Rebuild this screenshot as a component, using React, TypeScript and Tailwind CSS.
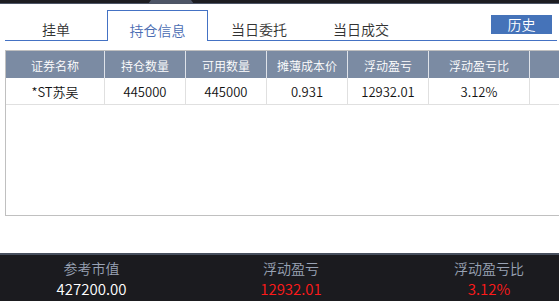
const tabs = ['挂单', '持仓信息', '当日委托', '当日成交'];

const columns = [
  { title: '证券名称', w: 'w-[99px]' },
  { title: '持仓数量', w: 'w-[81px]' },
  { title: '可用数量', w: 'w-[81px]' },
  { title: '摊薄成本价', w: 'w-[81px]' },
  { title: '浮动盈亏', w: 'w-[81px]' },
  { title: '浮动盈亏比', w: 'w-[101px]' },
];

const rows = [['*ST苏吴', '445000', '445000', '0.931', '12932.01', '3.12%']];

export default function App() {
  const active = 1;

  return (
    <div
      className="relative flex h-[301px] w-[559px] flex-col overflow-hidden bg-white font-[350]"
      style={{ fontFamily: '"Noto Sans CJK SC", "Liberation Sans", sans-serif' }}
    >
      {/* top strip */}
      <div className="h-[3px] bg-[#1d1d21]" />
      <div className="h-px bg-[#4d5566]" />
      <svg className="absolute left-[148px] top-0" width="46" height="4" viewBox="0 0 46 4">
        <polygon points="3,0 43,0 46,4 0,4" fill="#4d5566" />
      </svg>

      {/* tabs */}
      <div className="ml-[5px] mr-[2px] mt-[6px] flex h-[31px] border-b border-[#4472c4]">
        {tabs.map((t, i) =>
          i === active ? (
            <div
              key={t}
              className="-mb-px flex h-[31px] w-[101px] items-start justify-center border-x border-t border-[#4472c4] bg-white pt-[10px] text-[14px] leading-[18px] text-[#4a6cb3]"
            >
              {t}
            </div>
          ) : (
            <div
              key={t}
              className="flex h-[30px] w-[102px] items-start justify-center pt-[10px] text-[14px] leading-[18px] text-[#333]"
            >
              {t}
            </div>
          )
        )}
        <button className="ml-auto mr-[5px] mt-[5px] h-[19px] w-[61px] bg-[#4573b9] text-[14px] leading-[19px] text-white">
          历史
        </button>
      </div>

      {/* table */}
      <div className="ml-[5px] mt-[9px] h-[166px] border-y border-l border-[#c0c0c0]">
        <div className="flex h-[27px] bg-[#7b8ba3] text-[12px] text-white">
          {columns.map((c) => (
            <div key={c.title} className={`${c.w} flex shrink-0 items-center justify-center border-r border-[#dfe3ea] pt-[2px]`}>
              {c.title}
            </div>
          ))}
          <div className="flex-1" />
        </div>
        {rows.map((r, ri) => (
          <div key={ri} className="flex h-[27px] border-b border-[#e0e0e0] text-[13px] text-[#111]">
            {r.map((v, ci) => (
              <div key={ci} className={`${columns[ci].w} flex shrink-0 items-center justify-center border-r border-[#e0e0e0] pt-[1px]`}>
                {v}
              </div>
            ))}
            <div className="flex-1" />
          </div>
        ))}
      </div>

      {/* summary */}
      <div className="mt-auto flex h-[48px] border-t-2 border-[#474f5e] bg-[#1b1b1f]">
        <div className="flex w-[192px] shrink-0 flex-col items-center pr-[9px] pt-[2px]">
          <span className="text-[14px] leading-[22px] text-[#9aa3b5]">参考市值</span>
          <span className="text-[15px] leading-[20px] text-white">427200.00</span>
        </div>
        <div className="w-[2px] bg-[#474f5e]" />
        <div className="flex w-[198px] shrink-0 flex-col items-center pt-[2px]">
          <span className="text-[14px] leading-[22px] text-[#9aa3b5]">浮动盈亏</span>
          <span className="text-[15px] leading-[20px] text-[#ff1a1a]">12932.01</span>
        </div>
        <div className="w-[2px] bg-[#474f5e]" />
        <div className="flex w-[198px] shrink-0 flex-col items-center pt-[2px]">
          <span className="text-[14px] leading-[22px] text-[#9aa3b5]">浮动盈亏比</span>
          <span className="text-[15px] leading-[20px] text-[#ff1a1a]">3.12%</span>
        </div>
      </div>
    </div>
  );
}
